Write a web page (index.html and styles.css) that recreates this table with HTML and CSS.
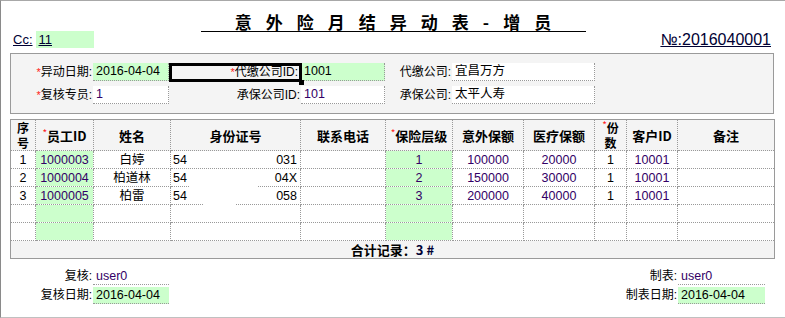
FILE: index.html
```html
<!DOCTYPE html>
<html lang="zh-CN">
<head>
<meta charset="utf-8">
<title>意外险月结异动表-增员</title>
<link rel="stylesheet" href="styles.css">
</head>
<body>
<div class="page">
  <div class="topmark"></div>
  <h1 class="title">意外险月结异动表-增员</h1>
  <div class="subhead">
    <div class="cc"><span class="u">Cc:</span><span class="ccval"><span class="u">11</span></span></div>
    <div class="no">№:2016040001</div>
  </div>

  <div class="panel">
    <div class="lbl"><span class="req">*</span>异动日期:</div>
    <div class="fld green">2016-04-04</div>
    <div class="lbl focus"><span class="req">*</span>代缴公司ID:<span class="handle"></span></div>
    <div class="fld green">1001</div>
    <div class="lbl">代缴公司:</div>
    <div class="fld">宜昌万方</div>

    <div class="lbl"><span class="req">*</span>复核专员:</div>
    <div class="fld num">1</div>
    <div class="lbl">承保公司ID:</div>
    <div class="fld num">101</div>
    <div class="lbl">承保公司:</div>
    <div class="fld">太平人寿</div>
  </div>

  <div class="grid-wrap">
    <table class="grid">
      <colgroup>
        <col class="c1"><col class="c2"><col class="c3"><col class="c4"><col class="c5"><col class="c6">
        <col class="c7"><col class="c8"><col class="c9"><col class="c10"><col class="c11">
      </colgroup>
      <thead>
        <tr>
          <th class="two">序<br>号</th>
          <th><span class="req">*</span>员工ID</th>
          <th>姓名</th>
          <th>身份证号</th>
          <th>联系电话</th>
          <th><span class="req">*</span>保险层级</th>
          <th>意外保额</th>
          <th>医疗保额</th>
          <th class="two"><span class="req">*</span>份<br>数</th>
          <th>客户ID</th>
          <th>备注</th>
        </tr>
      </thead>
      <tbody>
        <tr>
          <td class="ctr">1</td><td class="g ctr num">1000003</td><td class="ctr">白婷</td>
          <td><div class="idc"><span>54</span><span>031</span></div></td><td></td>
          <td class="g ctr num">1</td><td class="ctr num">100000</td><td class="ctr num">20000</td>
          <td class="ctr">1</td><td class="ctr num">10001</td><td></td>
        </tr>
        <tr>
          <td class="ctr">2</td><td class="g ctr num">1000004</td><td class="ctr">柏道林</td>
          <td><div class="idc"><span>54</span><span>04X</span></div></td><td></td>
          <td class="g ctr num">2</td><td class="ctr num">150000</td><td class="ctr num">30000</td>
          <td class="ctr">1</td><td class="ctr num">10001</td><td></td>
        </tr>
        <tr>
          <td class="ctr">3</td><td class="g ctr num">1000005</td><td class="ctr">柏雷</td>
          <td><div class="idc"><span>54</span><span>058</span></div></td><td></td>
          <td class="g ctr num">3</td><td class="ctr num">200000</td><td class="ctr num">40000</td>
          <td class="ctr">1</td><td class="ctr num">10001</td><td></td>
        </tr>
        <tr>
          <td></td><td class="g"></td><td></td><td></td><td></td><td class="g"></td><td></td><td></td><td></td><td></td><td></td>
        </tr>
        <tr>
          <td></td><td class="g"></td><td></td><td></td><td></td><td class="g"></td><td></td><td></td><td></td><td></td><td></td>
        </tr>
      </tbody>
      <tfoot>
        <tr><td colspan="11" class="total">合计记录：<span class="tnum">3 #</span></td></tr>
      </tfoot>
    </table>
    <div class="mask mask1"></div>
    <div class="mask mask2"></div>
  </div>

  <div class="footer">
    <div class="fgrid left">
      <div class="lbl">复核:</div>
      <div class="fld num">user0</div>
      <div class="lbl">复核日期:</div>
      <div class="fld green">2016-04-04</div>
    </div>
    <div class="fgrid right">
      <div class="lbl">制表:</div>
      <div class="fld num">user0</div>
      <div class="lbl">制表日期:</div>
      <div class="fld green">2016-04-04</div>
    </div>
  </div>
</div>
</body>
</html>
```

FILE: styles.css
```css
* { box-sizing: border-box; }
html, body { margin: 0; padding: 0; background: #fff; }
body {
  font-family: "Liberation Sans", "Noto Sans CJK SC", sans-serif;
  color: #000;
}
.page {
  position: relative;
  width: 785px;
  height: 318px;
  border-left: 1px solid #8a8a8a;
  border-top: 1px solid #a8a8a8;
  border-bottom: 1px solid #c0c0c0;
  overflow: hidden;
}
.topmark {
  position: absolute;
  top: -1px;
  left: 169px;
  width: 131px;
  height: 1px;
  background: #000080;
}
.title {
  width: 385px;
  margin: 12px auto 0;
  height: 19px;
  padding-left: 14px;
  border-bottom: 1px solid #000;
  text-align: center;
  font-family: "Noto Sans CJK SC", sans-serif;
  font-size: 17px;
  font-weight: bold;
  line-height: 18px;
  letter-spacing: 14px;
}
.subhead {
  display: flex;
  justify-content: space-between;
  align-items: flex-start;
  height: 17px;
  margin-top: -1px;
  padding: 0 14px 0 12px;
}
.cc {
  display: flex;
  align-items: center;
  height: 17px;
  font-size: 13px;
  line-height: 17px;
  color: #000033;
}
.u { text-decoration: underline; }
.ccval {
  width: 58px;
  height: 17px;
  margin-left: 3px;
  padding-left: 3px;
  background: #ccffcc;
}
.no {
  margin-top: 1px;
  font-size: 16px;
  line-height: 16px;
  color: #000033;
  text-decoration: underline;
}

.panel {
  display: grid;
  grid-template-columns: 82px 76px 132px 84px 67px 143px;
  grid-auto-rows: 18px;
  row-gap: 5px;
  width: 764px;
  height: 61px;
  margin: 5px 0 0 9px;
  padding: 9px 0 0 0;
  border: 1px solid #9a9a9a;
  background: #f4f4f4;
}
.lbl {
  position: relative;
  text-align: right;
  font-size: 12px;
  line-height: 18px;
  padding-right: 1px;
  white-space: nowrap;
}
.req { color: #ff2020; font-size: 11px; }
.fld {
  padding-left: 3px;
  background: #fff;
  border-right: 1px dotted #999;
  border-bottom: 1px dotted #999;
  font-size: 12.5px;
  line-height: 17px;
  white-space: nowrap;
}
.fld.green { background: #ccffcc; }
.num { color: #330066; }
.lbl.focus { padding-right: 3px; }
.lbl.focus::after {
  content: "";
  position: absolute;
  left: 0;
  top: 0;
  right: -1px;
  bottom: -1px;
  border: 3px solid #000;
}
.handle {
  position: absolute;
  right: -3px;
  bottom: -4px;
  width: 5px;
  height: 5px;
  background: #000;
  z-index: 1;
}

.grid-wrap {
  position: relative;
  width: 765px;
  margin: 5px 0 0 9px;
}
.grid {
  width: 765px;
  table-layout: fixed;
  border-collapse: collapse;
  border: 1px solid #9a9a9a;
  font-size: 12.5px;
}
.c1 { width: 25px; } .c2 { width: 58px; } .c3 { width: 77px; } .c4 { width: 130px; }
.c5 { width: 85px; } .c6 { width: 67px; } .c7 { width: 71px; } .c8 { width: 71px; }
.c9 { width: 32px; } .c10 { width: 51px; } .c11 { width: 97px; }
.grid th, .grid td {
  border: 1px dotted #999;
  padding: 0 2px;
  white-space: nowrap;
}
.grid td { overflow: hidden; }
.grid th {
  height: 30px;
  background: #f4f4f4;
  font-family: "Noto Sans CJK SC", sans-serif;
  font-size: 13px;
  font-weight: bold;
  line-height: 15px;
  text-align: center;
  padding: 0;
}
.grid th.two { font-size: 12px; line-height: 15px; padding: 0; }
.grid th .req { font-weight: normal; font-size: 10px; vertical-align: top; line-height: 10px; }
.grid td { height: 18px; line-height: 16px; }
.grid td.g { background: #ccffcc; }
.ctr { text-align: center; }
.idc { display: flex; justify-content: space-between; padding-right: 1px; }
.grid td.total {
  height: 18px;
  background: #f4f4f4;
  text-align: center;
  font-family: "Noto Sans CJK SC", sans-serif;
  font-size: 13px;
  font-weight: bold;
}
.tnum { color: #000033; }
.mask {
  position: absolute;
  height: 3px;
  background: #fff;
}
.mask1 { left: 180px; top: 65px; width: 68px; }
.mask2 { left: 193px; top: 83px; width: 32px; }

.footer {
  display: flex;
  justify-content: space-between;
  margin-top: 9px;
  padding: 0 20px 0 9px;
}
.fgrid {
  display: grid;
  grid-auto-rows: 17px;
  row-gap: 2px;
}
.fgrid.left { grid-template-columns: 83px 76px; }
.fgrid.right { grid-template-columns: 70px 87px; }
.fgrid .lbl { line-height: 17px; }
.fgrid .fld { border-right: 0; line-height: 16px; }
.fgrid .fld.num { background: transparent; }
```
